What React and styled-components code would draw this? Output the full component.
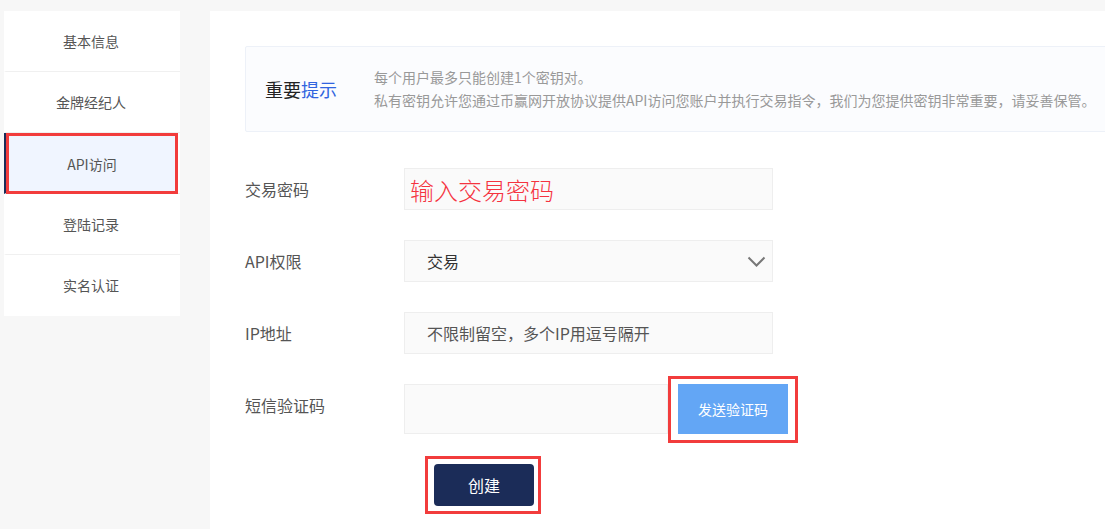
import React from "react";
import styled, { createGlobalStyle } from "styled-components";

const Global = createGlobalStyle`
  html, body { margin: 0; padding: 0; background: #f7f7f7; overflow: hidden; }
  body { font-family: "Noto Sans CJK SC", "Noto Sans", sans-serif; }
`;

const Page = styled.div`
  display: flex;
  align-items: flex-start;
  gap: 30px;
  padding: 11px 0 0 4px;
  width: 100%;
  height: 529px;
  box-sizing: border-box;
  overflow: hidden;
`;

const Sidebar = styled.nav`
  width: 176px;
  flex-shrink: 0;
  background: #fff;
  display: flex;
  flex-direction: column;
`;

const NavItem = styled.div`
  height: 60px;
  border-bottom: 1px solid ${(p) => (p.$last ? "transparent" : "#f0f0f0")};
  display: flex;
  border-left: 2px solid ${(p) => (p.$active ? "#1b2c58" : "transparent")};
  padding-right: 2px;
`;

const NavLabel = styled.div`
  flex: 1;
  display: flex;
  align-items: center;
  justify-content: center;
  font-size: 14px;
  color: #555;
  background: ${(p) => (p.$active ? "#f0f5ff" : "transparent")};
  box-shadow: ${(p) => (p.$active ? "inset 0 0 0 3px #f23c3c" : "none")};
  margin-left: ${(p) => (p.$active ? "0" : "-2px")};
  margin-bottom: ${(p) => (p.$active ? "-1px" : "0")};
`;

const Main = styled.main`
  flex: 1;
  min-width: 0;
  overflow: hidden;
  background: #fff;
  height: 518px;
  padding: 35px 0 0 35px;
  box-sizing: border-box;
`;

const Notice = styled.div`
  width: 880px;
  height: 86px;
  box-sizing: border-box;
  background: #fbfcfe;
  border: 1px solid #edf1f8;
  border-radius: 2px;
  display: flex;
  align-items: center;
  padding-left: 19px;
`;

const NoticeTitle = styled.div`
  width: 109px;
  flex-shrink: 0;
  font-size: 18px;
  color: #222;
`;

const Blue = styled.span`
  color: #3164df;
`;

const NoticeText = styled.div`
  font-size: 14px;
  line-height: 23px;
  color: #999;
  white-space: nowrap;
`;

const Form = styled.div`
  margin-top: 36px;
  display: flex;
  flex-direction: column;
  gap: 30px;
`;

const Row = styled.div`
  display: flex;
  align-items: flex-start;
`;

const Label = styled.div`
  width: 159px;
  line-height: 42px;
  font-size: 16px;
  color: #555;
`;

const Field = styled.div`
  width: ${(p) => p.$w || 369}px;
  height: ${(p) => p.$h || 42}px;
  box-sizing: border-box;
  background: #fafafa;
  border: 1px solid #eee;
  display: flex;
  align-items: center;
  justify-content: space-between;
  padding: 0 5px 0 ${(p) => p.$pl || 22}px;
  color: ${(p) => p.$color || "#555"};
  font-size: ${(p) => p.$fs || 16}px;
  font-weight: ${(p) => p.$fw || 400};
`;

const Chevron = styled.svg`
  width: 19px;
  height: 11px;
  margin-right: 1px;
`;

const Mark = styled.div`
  border: 3px solid #f23c3c;
  padding: ${(p) => p.$pad};
  margin: ${(p) => p.$m};
  background: #fff;
  display: flex;
`;

const SendButton = styled.button`
  width: 110px;
  height: 50px;
  border: none;
  background: #63a6f5;
  color: #fff;
  font-family: inherit;
  font-size: 14px;
  padding: 0;
`;

const CreateButton = styled.button`
  width: 100px;
  height: 42px;
  border: none;
  border-radius: 4px;
  background: #1b2c58;
  color: #fff;
  font-family: inherit;
  font-size: 16px;
  padding: 0;
`;

const ButtonRow = styled.div`
  display: flex;
  margin-top: 13px;
  padding-left: 180px;
`;

const navItems = ["基本信息", "金牌经纪人", "API访问", "登陆记录", "实名认证"];

export default function App() {
  return (
    <>
      <Global />
      <Page>
        <Sidebar>
          {navItems.map((t, i) => (
            <NavItem key={t} $active={i === 2} $last={i === navItems.length - 1}>
              <NavLabel $active={i === 2}>{t}</NavLabel>
            </NavItem>
          ))}
        </Sidebar>
        <Main>
          <Notice>
            <NoticeTitle>
              重要<Blue>提示</Blue>
            </NoticeTitle>
            <NoticeText>
              每个用户最多只能创建1个密钥对。
              <br />
              私有密钥允许您通过币赢网开放协议提供API访问您账户并执行交易指令，我们为您提供密钥非常重要，请妥善保管。
            </NoticeText>
          </Notice>
          <Form>
            <Row>
              <Label>交易密码</Label>
              <Field $pl={5} $fs={24} $fw={300} $color="#f5333f">
                输入交易密码
              </Field>
            </Row>
            <Row>
              <Label>API权限</Label>
              <Field $color="#333">
                交易
                <Chevron viewBox="0 0 19 11">
                  <polyline points="1.5,1.5 9.5,9.5 17.5,1.5" fill="none" stroke="#777" strokeWidth="2" />
                </Chevron>
              </Field>
            </Row>
            <Row>
              <Label>IP地址</Label>
              <Field>不限制留空，多个IP用逗号隔开</Field>
            </Row>
            <Row>
              <Label>短信验证码</Label>
              <Field $w={264} $h={50} />
              <Mark $pad="5px 7px 6px 7px" $m="-8px 0 0 0">
                <SendButton>发送验证码</SendButton>
              </Mark>
            </Row>
          </Form>
          <ButtonRow>
            <Mark $pad="5px 4px 5px 6px" $m="0">
              <CreateButton>创建</CreateButton>
            </Mark>
          </ButtonRow>
        </Main>
      </Page>
    </>
  );
}
